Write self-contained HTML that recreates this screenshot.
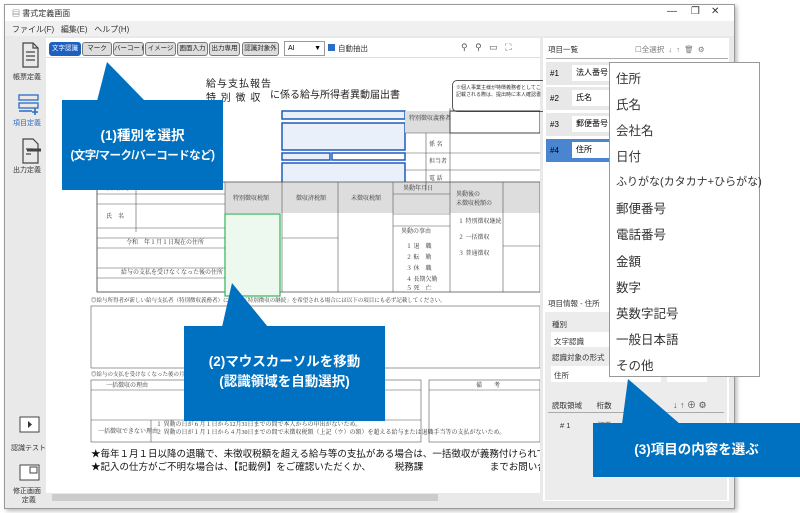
<!DOCTYPE html>
<html><head><meta charset="utf-8"><style>
body{margin:0;width:800px;height:513px;overflow:hidden;background:#fff;font-family:"Liberation Sans","Noto Sans CJK JP",sans-serif;position:relative}
.a{position:absolute}
.t{font-size:8px;color:#333;white-space:nowrap}
.btn{position:absolute;top:42px;height:12px;border:1px solid #777;border-radius:3px;background:#ddd;font-size:6.5px;line-height:12px;text-align:center;color:#222;white-space:nowrap;overflow:hidden}
.co{position:absolute;background:#0070c0;color:#fff;font-weight:bold;text-align:center;white-space:nowrap}
.pi{position:absolute;left:616px;font-size:12.5px;color:#333;white-space:nowrap}
.row{position:absolute;left:546px;width:64px;height:23px;background:#e8e8e8;font-size:8px}
.row span{position:absolute;left:4px;top:7px}
.row i{position:absolute;left:26px;top:3px;width:40px;height:16px;background:#fff;font-style:normal;font-size:8px;line-height:16px;padding-left:4px}
</style></head><body>
<div class="a" style="left:4px;top:4px;width:729px;height:503px;border:1px solid #999;background:#e9e9e9;box-shadow:2px 2px 4px #bbb"></div>
<div class="a" style="left:5px;top:5px;width:729px;height:16px;background:#fff"></div>
<div class="a t" style="left:12px;top:8px;font-size:8px">▤ 書式定義画面</div>
<div class="a t" style="left:667px;top:6px;font-size:10px">—&nbsp;&nbsp;&nbsp;&nbsp;&nbsp;❐&nbsp;&nbsp;&nbsp;&nbsp;✕</div>
<div class="a" style="left:5px;top:21px;width:729px;height:15px;background:#f0f0f0"></div>
<div class="a t" style="left:12px;top:24px;font-size:8px">ファイル(F)&nbsp;&nbsp;&nbsp;編集(E)&nbsp;&nbsp;&nbsp;ヘルプ(H)</div>
<svg class="a" style="left:5px;top:36px" width="42" height="470">
<g fill="none" stroke="#444" stroke-width="1.2"><path d="M18 7h10l5 5v19H18z M28 7v5h5 M21 16h9 M21 20h9 M21 24h9"/></g>
<g fill="none" stroke="#2b6cc4" stroke-width="1.3"><rect x="14" y="59" width="19" height="5"/><rect x="14" y="67" width="19" height="5"/><path d="M14 75h13 M30 72v7 M27 76h6" stroke-width="1.6"/></g>
<g fill="none" stroke="#444" stroke-width="1.2"><path d="M18 103h10l5 5v19H18z M21 113h7 M21 118h5"/><path d="M22 114h14" stroke-width="3"/></g>
<rect x="15" y="381" width="19" height="15" fill="#fff" stroke="#444"/><path d="M23 385l4 3.5-4 3.5z" fill="#333"/>
<rect x="15" y="429" width="19" height="15" fill="#fff" stroke="#444"/><rect x="25" y="431" width="7" height="6" fill="none" stroke="#444"/>
</svg>
<div class="a t" style="left:13px;top:72px;font-size:7px">帳票定義</div>
<div class="a t" style="left:13px;top:118px;font-size:7px;color:#2b6cc4">項目定義</div>
<div class="a t" style="left:13px;top:165px;font-size:7px">出力定義</div>
<div class="a t" style="left:11px;top:443px;font-size:7px">認識テスト</div>
<div class="a t" style="left:13px;top:487px;font-size:7px;text-align:center;line-height:9px">修正画面<br>&nbsp;&nbsp;定義</div>
<div class="a" style="left:46px;top:38px;width:494px;height:455px;background:#fff"></div>
<div class="btn" style="left:49px;width:30px;background:#1e60c0;color:#fff;border-color:#1e60c0">文字認識</div>
<div class="btn" style="left:82px;width:28px">マーク</div>
<div class="btn" style="left:113px;width:29px">バーコード</div>
<div class="btn" style="left:145px;width:29px">イメージ</div>
<div class="btn" style="left:177px;width:29px">画面入力</div>
<div class="btn" style="left:209px;width:29px">出力専用</div>
<div class="btn" style="left:242px;width:35px">認識対象外</div>
<div class="a" style="left:284px;top:41px;width:36px;height:13px;border:1px solid #999;font-size:7px;line-height:13px;padding-left:3px">AI<span style="position:absolute;right:3px">▼</span></div>
<div class="a" style="left:328px;top:44px;width:7px;height:7px;background:#2b6cc4"></div>
<div class="a t" style="left:338px;top:43px;font-size:7.5px">自動抽出</div>
<div class="a t" style="left:461px;top:42px;font-size:9px;color:#555">⚲&nbsp;&nbsp;&nbsp;⚲&nbsp;&nbsp;&nbsp;▭&nbsp;&nbsp;&nbsp;⛶</div>
<div class="a" style="left:46px;top:57px;width:494px;height:1px;background:#ddd"></div>
<div class="a" style="left:206px;top:78px;font-size:10px;color:#222;letter-spacing:1px;line-height:14px">給与支払報告<br>特 別 徴 収</div>
<div class="a" style="left:270px;top:86px;font-size:10px;color:#222">に係る給与所得者異動届出書</div>
<div class="a" style="left:452px;top:80px;width:90px;height:24px;border:1px solid #555;border-radius:5px;font-size:5px;color:#333;padding:3px;white-space:nowrap;overflow:hidden">※個人事業主様が特徴義務者としてこ<br>記載される際は、提出時に本人確認書</div>
<svg class="a" style="left:46px;top:108px" width="494" height="385" font-family="Liberation Serif,Noto Serif CJK SC,serif" font-size="6" fill="#333">
<g fill="#e9f0fa" stroke="#1f5bbd" stroke-width="1.5"><rect x="236" y="3" width="123" height="8"/><rect x="236" y="15" width="123" height="27"/><rect x="236" y="45" width="48" height="7"/><rect x="286" y="45" width="73" height="7" fill="#fff"/><rect x="236" y="55" width="123" height="27"/></g>
<rect x="359" y="3" width="45" height="22" fill="#ddd"/>
<rect x="404" y="3" width="90" height="22" fill="none" stroke="#333"/>
<rect x="179" y="74" width="315" height="31" fill="#ddd"/>
<rect x="51" y="74" width="128" height="110" fill="none" stroke="#555" stroke-width="0.6"/>
<rect x="51" y="74" width="443" height="110" fill="none" stroke="#555" stroke-width="0.8"/>
<rect x="179" y="106" width="55" height="82" fill="#edf8ef" stroke="#2fb55a" stroke-width="1.2"/>
<g stroke="#555" stroke-width="0.6"><path d="M236 74v110 M292 74v110 M347 74v110 M404 0v184 M457 74v110 M51 86h128 M51 96h128 M51 120h128 M51 130h128 M51 140h128 M51 160h128 M51 170h128 M347 86h57 M347 106h57 M347 118h57 M457 138h37 M236 130h56 M359 25h135 M359 45h135 M359 62h135 M90 74v50 M380 25v57"/></g>
<text x="187" y="92">特別徴収税額</text><text x="250" y="92">徴収済税額</text><text x="305" y="92">未徴収税額</text><text x="357" y="82">異動年月日</text><text x="410" y="88">異動後の</text><text x="410" y="97">未徴収税額の</text>
<text x="60" y="82">個人番号</text><text x="60" y="110">氏　名</text><text x="80" y="136">令和　年１月１日現在の住所</text><text x="75" y="166">給与の支払を受けなくなった後の住所</text>
<text x="355" y="125">異動の事由</text><text x="360" y="140">１ 退　職</text><text x="360" y="151">２ 転　勤</text><text x="360" y="162">３ 休　職</text><text x="360" y="173">４ 長期欠勤</text><text x="360" y="182">５ 死　亡</text>
<text x="412" y="115">１ 特別徴収継続</text><text x="412" y="131">２ 一括徴収</text><text x="412" y="147">３ 普通徴収</text>
<text x="363" y="12">特別徴収義務者</text><text x="383" y="38">係 名</text><text x="383" y="55">担当者</text><text x="383" y="72">電 話</text>
<text x="45" y="194" font-size="5.5">◎給与所得者が新しい給与支払者（特別徴収義務者）に　　　「特別徴収の継続」を希望される場合には以下の項目にも必ず記載してください。</text>
<rect x="45" y="198" width="449" height="62" fill="none" stroke="#555" stroke-width="0.6"/>
<text x="45" y="268" font-size="5.5">◎給与の支払を受けなくなった後の月割</text>
<rect x="45" y="272" width="330" height="62" fill="none" stroke="#555" stroke-width="0.6"/>
<rect x="383" y="272" width="111" height="62" fill="none" stroke="#555" stroke-width="0.6"/>
<g stroke="#555" stroke-width="0.6"><path d="M45 282h330 M45 312h330 M105 312v22 M383 282h111"/></g>
<text x="60" y="279">一括徴収の理由</text><text x="52" y="325">一括徴収できない理由</text><text x="110" y="318">１ 異動の日が６月１日から12月31日までの間で本人からの申出がないため。</text><text x="110" y="326">２ 異動の日が１月１日から４月30日までの間で未徴収税額（上記（ウ）の額）を超える給与または退職手当等の支払がないため。</text><text x="430" y="279">備　　考</text>
<text x="45" y="349" font-family="Liberation Sans,Noto Sans CJK JP,sans-serif" font-size="9.5" fill="#111">★毎年１月１日以降の退職で、未徴収税額を超える給与等の支払がある場合は、一括徴収が義務付けられてい</text>
<text x="45" y="362" font-family="Liberation Sans,Noto Sans CJK JP,sans-serif" font-size="9.5" fill="#111">★記入の仕方がご不明な場合は、【記載例】をご確認いただくか、　　　税務課　　　　　　　までお問い合わ</text>
</svg>
<div class="a" style="left:52px;top:494px;width:386px;height:7px;background:#ccc"></div>
<div class="a" style="left:543px;top:38px;width:186px;height:463px;background:#fff"></div>
<div class="a t" style="left:548px;top:44px;font-size:7.5px">項目一覧</div>
<div class="a t" style="left:635px;top:44px;font-size:7.5px;color:#777">☐全選択&nbsp;&nbsp;↓&nbsp;&nbsp;↑&nbsp;&nbsp;🗑&nbsp;&nbsp;⚙</div>
<div class="a" style="left:546px;top:58px;width:182px;height:1px;background:#aaa"></div>
<div class="row" style="top:62px"><span>#1</span><i>法人番号</i></div>
<div class="row" style="top:87px"><span>#2</span><i>氏名</i></div>
<div class="row" style="top:113px"><span>#3</span><i>郵便番号</i></div>
<div class="row" style="top:139px;background:#4a86d0"><span>#4</span><i>住所</i></div>
<div class="a t" style="left:548px;top:298px;font-size:7.5px">項目情報 - 住所</div>
<div class="a" style="left:545px;top:312px;width:182px;height:188px;background:#ececec"></div>
<div class="a t" style="left:552px;top:319px;font-size:7.5px">種別</div>
<div class="a" style="left:551px;top:332px;width:70px;height:15px;background:#fff"></div>
<div class="a t" style="left:554px;top:336px;font-size:7.5px">文字認識</div>
<div class="a t" style="left:552px;top:352px;font-size:7.5px">認識対象の形式</div>
<div class="a" style="left:551px;top:366px;width:110px;height:16px;background:#fff"></div>
<div class="a" style="left:667px;top:366px;width:40px;height:16px;background:#fff"></div>
<div class="a t" style="left:554px;top:370px;font-size:7.5px">住所</div>
<div class="a t" style="left:552px;top:400px;font-size:7.5px">読取領域&nbsp;&nbsp;&nbsp;&nbsp;&nbsp;&nbsp;&nbsp;桁数</div>
<div class="a t" style="left:673px;top:398px;font-size:9px;color:#555">↓ ↑ ⊕ ⚙</div>
<div class="a" style="left:548px;top:412px;width:176px;height:1px;background:#aaa"></div>
<div class="a t" style="left:560px;top:420px;font-size:7.5px">#&nbsp;1&nbsp;&nbsp;&nbsp;&nbsp;&nbsp;&nbsp;&nbsp;&nbsp;&nbsp;&nbsp;&nbsp;&nbsp;&nbsp;桁数</div>
<div class="a" style="left:609px;top:62px;width:149px;height:313px;background:#fff;border:1px solid #999"></div>
<div class="pi" style="top:68px">住所</div>
<div class="pi" style="top:94px">氏名</div>
<div class="pi" style="top:120px">会社名</div>
<div class="pi" style="top:146px">日付</div>
<div class="pi" style="top:173px;font-size:11px">ふりがな(カタカナ+ひらがな)</div>
<div class="pi" style="top:198px">郵便番号</div>
<div class="pi" style="top:224px">電話番号</div>
<div class="pi" style="top:251px">金額</div>
<div class="pi" style="top:277px">数字</div>
<div class="pi" style="top:303px">英数字記号</div>
<div class="pi" style="top:329px">一般日本語</div>
<div class="pi" style="top:355px">その他</div>
<svg class="a" style="left:0;top:0" width="800" height="513">
<polygon points="107,62 97,101 145,101" fill="#0070c0"/>
<polygon points="232,283 222,327 268,327" fill="#0070c0"/>
<polygon points="628,379 622,424 680,424" fill="#0070c0"/>
</svg>
<div class="co" style="left:62px;top:100px;width:161px;height:90px;font-size:13.5px;line-height:19px;padding-top:26px;box-sizing:border-box">(1)種別を選択<br><span style="font-size:11.5px;letter-spacing:-0.5px">(文字/マーク/バーコードなど)</span></div>
<div class="co" style="left:184px;top:326px;width:201px;height:95px;font-size:13.5px;line-height:20px;padding-top:26px;box-sizing:border-box">(2)マウスカーソルを移動<br>(認識領域を自動選択)</div>
<div class="co" style="left:593px;top:423px;width:207px;height:54px;font-size:13.5px;line-height:54px">(3)項目の内容を選ぶ</div>
</body></html>
